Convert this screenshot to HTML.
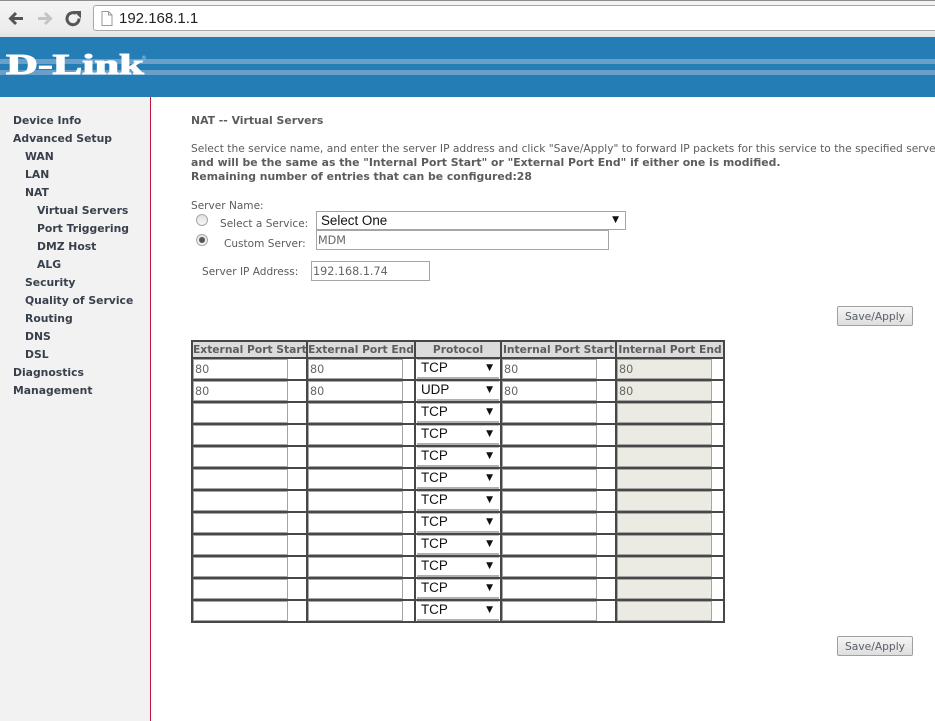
<!DOCTYPE html>
<html>
<head>
<meta charset="utf-8">
<title>192.168.1.1</title>
<style>
html,body{margin:0;padding:0;width:935px;height:721px;overflow:hidden;background:#fff}
body{position:relative;font-family:"DejaVu Sans","Liberation Sans",sans-serif;color:#5a5a5a}
.a{position:absolute;white-space:nowrap}
#clip{position:absolute;left:0;top:0;width:935px;height:721px;overflow:hidden}
#chrome{left:0;top:0;width:935px;height:37px;background:linear-gradient(#f4f4f4,#ececec 85%,#e2e2e2);border-top:1px solid #8a8f8a;box-sizing:border-box}
#addr{left:93px;top:5px;width:842px;height:26px;background:#fff;border:1px solid #a8a8a8;border-right:0;border-radius:3px 0 0 3px;box-sizing:border-box;font:15px "Liberation Sans",sans-serif;color:#222;line-height:25px;padding-left:25px}
#hdr{left:0;top:37px;width:935px;height:60px;background:#247db4;overflow:hidden}
.band{position:absolute;left:0;width:935px;background:#6a9fca}
#logo{left:6px;top:49px;font:bold 28px/34px "Liberation Serif",serif;color:#fff;-webkit-text-stroke:1px #fff;transform:scaleX(1.58);transform-origin:0 0}
#reg{left:141px;top:55px;font:6px/7px "DejaVu Sans",sans-serif;color:#a9cbe2}
#side{left:0;top:97px;width:150px;height:624px;background:#f2f2f2;border-right:1px solid #c2143c}
.m{position:absolute;font:bold 10.8px/18px "DejaVu Sans",sans-serif;color:#38404c;white-space:nowrap}
.t{position:absolute;white-space:nowrap;font-size:10.55px;line-height:14px;color:#5c5c5c}
.b{font-weight:bold;font-size:10.85px}
.box{position:absolute;box-sizing:border-box;border:1px solid #a5a5a5;background:#fff;font:11.2px/17px "DejaVu Sans",sans-serif;color:#666;padding:0 0 0 1px;margin:0;outline:0}
.sel{position:absolute;box-sizing:border-box;border:1px solid #a5a5a5;background:#fff;font:13.4px/17px "Liberation Sans",sans-serif;color:#111;white-space:nowrap}
.sel i{position:absolute;right:6px;top:-1px;font:normal 9px/18px "DejaVu Sans",sans-serif;color:#111}
.btn{position:absolute;left:837px;width:76px;height:20px;box-sizing:border-box;border:1px solid #a0a0a0;border-radius:2px;background:linear-gradient(#f6f6f6,#dedede);font:10.7px/18px "DejaVu Sans",sans-serif;color:#5a5f68;text-align:center;padding:1px 0 0}
.radio{position:absolute;width:12px;height:12px;box-sizing:border-box;border-radius:50%;border:1px solid #a8a8a8;background:linear-gradient(#e2e2e2,#f6f6f6)}
.radio b{position:absolute;left:2px;top:2px;width:6px;height:6px;border-radius:50%;background:#555}
#tb{position:absolute;left:191px;top:340px;border-collapse:collapse;table-layout:fixed;width:532px;background:#fff}
#tb td,#tb th{border:2px solid #474747;padding:0;box-sizing:border-box;position:relative;overflow:hidden}
#tb th{background:#dcdcdc;font:bold 10.7px/15px "DejaVu Sans",sans-serif;color:#5e5e5e;height:16px;white-space:nowrap;text-align:center}
#tb td{height:22px}
#tb .box{left:0;top:0;width:95px;height:20px;font-size:11.2px;line-height:18px}
#tb .d{background:#ebebe4;border-color:#a5a5a5}
#tb .sel{left:1px;top:0;width:82px;height:20px;font-size:13.4px;line-height:15px;padding-left:4px;border:0;border-bottom:2px solid #b0b0b0;border-top:1px solid #bbb}
</style>
</head>
<body>
<div id="clip">
<div id="chrome" class="a"></div>
<svg class="a" style="left:7px;top:10px" width="76" height="18" viewBox="0 0 76 18">
<path d="M16 8.500H4M9 3 3.500 8.500 9 14" fill="none" stroke="#555" stroke-width="3"/>
<path d="M31 8.500H43M38 3l5.500 5.500L38 14" fill="none" stroke="#c4c4c4" stroke-width="3"/>
<path d="M72 8.500A6 6 0 1 1 69 3.500" fill="none" stroke="#555" stroke-width="3"/>
<path d="M66.500 1h7.500v7.500z" fill="#555"/>
</svg>
<div id="addr" class="a">192.168.1.1</div>
<svg class="a" style="left:101px;top:11px" width="12" height="15" viewBox="0 0 12 15"><path d="M1 .5h6.500L11 4v10.500H1zM7.500.5V4H11" fill="#fff" stroke="#9a9a9a"/></svg>

<div id="hdr" class="a">
<div class="band" style="top:22px;height:5px"></div>
<div class="band" style="top:33px;height:5px"></div>
</div>
<div id="logo" class="a">D-Link</div>
<div id="reg" class="a">®</div>

<div id="side" class="a"></div>
<div class="m" style="left:13px;top:112px">Device Info</div>
<div class="m" style="left:13px;top:130px">Advanced Setup</div>
<div class="m" style="left:25px;top:148px">WAN</div>
<div class="m" style="left:25px;top:166px">LAN</div>
<div class="m" style="left:25px;top:184px">NAT</div>
<div class="m" style="left:37px;top:202px">Virtual Servers</div>
<div class="m" style="left:37px;top:220px">Port Triggering</div>
<div class="m" style="left:37px;top:238px">DMZ Host</div>
<div class="m" style="left:37px;top:256px">ALG</div>
<div class="m" style="left:25px;top:274px">Security</div>
<div class="m" style="left:25px;top:292px">Quality of Service</div>
<div class="m" style="left:25px;top:310px">Routing</div>
<div class="m" style="left:25px;top:328px">DNS</div>
<div class="m" style="left:25px;top:346px">DSL</div>
<div class="m" style="left:13px;top:364px">Diagnostics</div>
<div class="m" style="left:13px;top:382px">Management</div>

<div class="t b" style="left:191px;top:114px">NAT -- Virtual Servers</div>
<div class="t" style="left:191px;top:142px;font-size:10.66px">Select the service name, and enter the server IP address and click "Save/Apply" to forward IP packets for this service to the specified serve</div>
<div class="t b" style="left:191px;top:156px">and will be the same as the "Internal Port Start" or "External Port End" if either one is modified.</div>
<div class="t b" style="left:191px;top:170px">Remaining number of entries that can be configured:28</div>
<div class="t" style="left:191px;top:199px">Server Name:</div>
<div class="radio" style="left:196px;top:214px"></div>
<div class="t" style="left:220px;top:217px">Select a Service:</div>
<div class="sel" style="left:316px;top:211px;width:310px;height:19px;padding-left:4px">Select One<i>▼</i></div>
<div class="radio" style="left:196px;top:234px"><b></b></div>
<div class="t" style="left:224px;top:237px">Custom Server:</div>
<input class="box" style="left:316px;top:230px;width:293px;height:20px;padding-top:1px" value="MDM">
<div class="t" style="left:202px;top:265px">Server IP Address:</div>
<input class="box" style="left:311px;top:261px;width:119px;height:20px" value="192.168.1.74">
<button class="btn" style="top:306px">Save/Apply</button>

<table id="tb">
<colgroup><col style="width:115px"><col style="width:108px"><col style="width:86px"><col style="width:115px"><col style="width:108px"></colgroup>
<tr><th>External Port Start</th><th>External Port End</th><th>Protocol</th><th>Internal Port Start</th><th>Internal Port End</th></tr>
<tr><td><input class="box" value="80"></td><td><input class="box" value="80"></td><td><div class="sel">TCP<i>▼</i></div></td><td><input class="box" value="80"></td><td><input class="box d" value="80"></td></tr>
<tr><td><input class="box" value="80"></td><td><input class="box" value="80"></td><td><div class="sel">UDP<i>▼</i></div></td><td><input class="box" value="80"></td><td><input class="box d" value="80"></td></tr>
<tr><td><input class="box"></td><td><input class="box"></td><td><div class="sel">TCP<i>▼</i></div></td><td><input class="box"></td><td><input class="box d"></td></tr>
<tr><td><input class="box"></td><td><input class="box"></td><td><div class="sel">TCP<i>▼</i></div></td><td><input class="box"></td><td><input class="box d"></td></tr>
<tr><td><input class="box"></td><td><input class="box"></td><td><div class="sel">TCP<i>▼</i></div></td><td><input class="box"></td><td><input class="box d"></td></tr>
<tr><td><input class="box"></td><td><input class="box"></td><td><div class="sel">TCP<i>▼</i></div></td><td><input class="box"></td><td><input class="box d"></td></tr>
<tr><td><input class="box"></td><td><input class="box"></td><td><div class="sel">TCP<i>▼</i></div></td><td><input class="box"></td><td><input class="box d"></td></tr>
<tr><td><input class="box"></td><td><input class="box"></td><td><div class="sel">TCP<i>▼</i></div></td><td><input class="box"></td><td><input class="box d"></td></tr>
<tr><td><input class="box"></td><td><input class="box"></td><td><div class="sel">TCP<i>▼</i></div></td><td><input class="box"></td><td><input class="box d"></td></tr>
<tr><td><input class="box"></td><td><input class="box"></td><td><div class="sel">TCP<i>▼</i></div></td><td><input class="box"></td><td><input class="box d"></td></tr>
<tr><td><input class="box"></td><td><input class="box"></td><td><div class="sel">TCP<i>▼</i></div></td><td><input class="box"></td><td><input class="box d"></td></tr>
<tr><td><input class="box"></td><td><input class="box"></td><td><div class="sel">TCP<i>▼</i></div></td><td><input class="box"></td><td><input class="box d"></td></tr>
</table>
<button class="btn" style="top:636px">Save/Apply</button>
</div>
</body>
</html>
